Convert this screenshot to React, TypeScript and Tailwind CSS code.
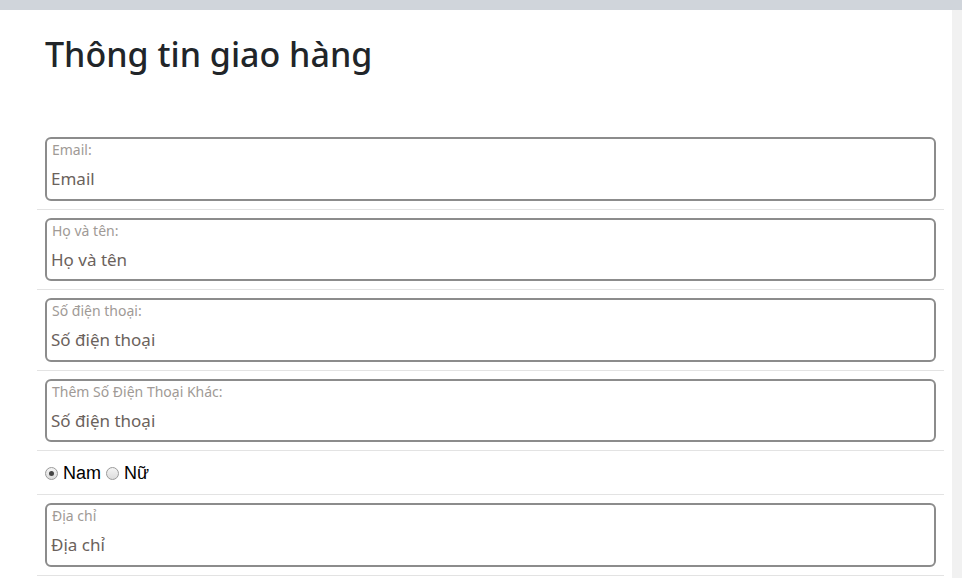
import React from 'react';

const fields = [
  { label: 'Email:', placeholder: 'Email' },
  { label: 'Họ và tên:', placeholder: 'Họ và tên' },
  { label: 'Số điện thoại:', placeholder: 'Số điện thoại' },
  { label: 'Thêm Số Điện Thoại Khác:', placeholder: 'Số điện thoại' },
];

function Field({ label, placeholder }: { label: string; placeholder: string }) {
  return (
    <div className="border-b border-[#e3e3e3] pt-2 pb-2">
      <div className="ml-2 mr-2 h-[63.5px] rounded-[6px] border-2 border-[#8c8c8c] px-[4px] pt-[2px]">
        <div className="ml-px text-[14px] leading-[18px] text-[#a09a96]">{label}</div>
        <input
          placeholder={placeholder}
          className="mt-[8px] w-full bg-transparent text-[17px] leading-[24px] outline-none placeholder:text-[#6b625c]"
        />
      </div>
    </div>
  );
}

function Radio({ checked, label }: { checked?: boolean; label: string }) {
  return (
    <label className="flex items-center gap-[5px]">
      <span className="flex h-[13px] w-[13px] items-center justify-center rounded-full border border-[#9a9a9a] bg-gradient-to-b from-[#f4f4f4] to-[#dcdcdc]">
        {checked && <span className="h-[5px] w-[5px] rounded-full bg-[#444]" />}
      </span>
      <span>{label}</span>
    </label>
  );
}

export default function App() {
  return (
    <div className="flex h-[578px] w-[962px] flex-col overflow-hidden bg-white font-['Noto_Sans',sans-serif] text-[#212529]">
      <div className="h-[10px] w-full shrink-0 bg-[#d0d5db]" />
      <div className="flex flex-1">
        <div className="w-[952px]">
          <h2 className="ml-[45px] mt-[20px] text-[34px] font-medium leading-[48px]">Thông tin giao hàng</h2>
          <div className="ml-[37px] mr-[8px] mt-[51px]">
            {fields.map((f, i) => (
              <Field key={i} label={f.label} placeholder={f.placeholder} />
            ))}
            <div className="flex h-[44px] items-center gap-[5px] border-b border-[#e3e3e3] pl-2 pt-[2px] font-['Liberation_Sans',sans-serif] text-[18px] text-black">
              <Radio checked label="Nam" />
              <Radio label="Nữ" />
            </div>
            <Field label="Địa chỉ" placeholder="Địa chỉ" />
          </div>
        </div>
        <div className="w-[10px] bg-[#f1f1f1]" />
      </div>
    </div>
  );
}
